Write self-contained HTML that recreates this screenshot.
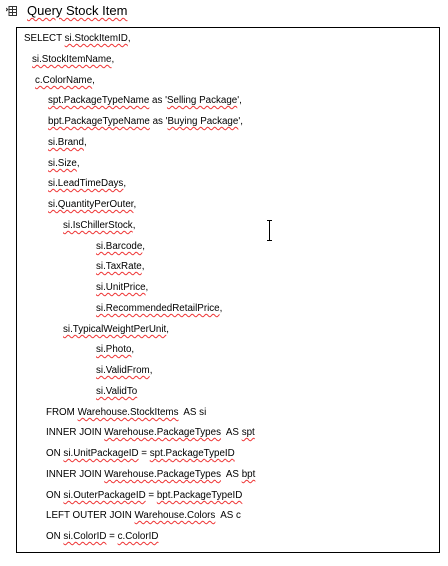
<!DOCTYPE html>
<html><head><meta charset="utf-8"><style>
body{margin:0;width:448px;height:564px;background:#fff;position:relative;overflow:hidden;font-family:"Liberation Sans",sans-serif;color:#000}
.t{position:absolute;left:27px;top:3px;font-size:13px;line-height:16px}
.box{position:absolute;left:16px;top:27px;width:422px;height:524px;border:1px solid #000}
.w{position:absolute;left:0;top:2px;width:448px;height:564px}
.l{position:absolute;font-size:9.8px;line-height:12px;white-space:pre}
u{text-decoration:underline wavy #e33;text-decoration-thickness:1px;text-underline-offset:2px}
.ic{position:absolute;left:6px;top:6px;width:11px;height:10px}
.cur{position:absolute;left:269px;top:220px;width:1px;height:21px;background:#000}
.cur:before,.cur:after{content:"";position:absolute;left:-2px;width:5px;height:1px;background:#000}
.cur:before{top:0}.cur:after{bottom:0}
</style></head><body>
<svg class="ic" viewBox="0 0 11 10"><rect x="3" y="0.5" width="7.5" height="9" fill="none" stroke="#333"/><line x1="3" y1="3.5" x2="10.5" y2="3.5" stroke="#333"/><line x1="3" y1="6.5" x2="10.5" y2="6.5" stroke="#333"/><line x1="6.5" y1="0.5" x2="6.5" y2="9.5" stroke="#333"/><path d="M0 2 L2 4 M0 5 L2 3" stroke="#333"/></svg>
<div class="t"><u>Query Stock Item</u></div>
<div class="box"></div>
<div class="cur"></div>
<div class="w">
<div class="l" style="left:24px;top:31px">SELECT <u>si.StockItemID</u>,</div>
<div class="l" style="left:32px;top:52px"><u>si.StockItemName</u>,</div>
<div class="l" style="left:35px;top:73px"><u>c.ColorName</u>,</div>
<div class="l" style="left:48px;top:93px"><u>spt.PackageTypeName</u> as '<u>Selling Package</u>',</div>
<div class="l" style="left:48px;top:114px"><u>bpt.PackageTypeName</u> as '<u>Buying Package</u>',</div>
<div class="l" style="left:48px;top:135px"><u>si.Brand</u>,</div>
<div class="l" style="left:48px;top:156px"><u>si.Size</u>,</div>
<div class="l" style="left:48px;top:176px"><u>si.LeadTimeDays</u>,</div>
<div class="l" style="left:48px;top:197px"><u>si.QuantityPerOuter</u>,</div>
<div class="l" style="left:63px;top:218px"><u>si.IsChillerStock</u>,</div>
<div class="l" style="left:96px;top:239px"><u>si.Barcode</u>,</div>
<div class="l" style="left:96px;top:259px"><u>si.TaxRate</u>,</div>
<div class="l" style="left:96px;top:280px"><u>si.UnitPrice</u>,</div>
<div class="l" style="left:96px;top:301px"><u>si.RecommendedRetailPrice</u>,</div>
<div class="l" style="left:63px;top:322px"><u>si.TypicalWeightPerUnit</u>,</div>
<div class="l" style="left:96px;top:342px"><u>si.Photo</u>,</div>
<div class="l" style="left:96px;top:363px"><u>si.ValidFrom</u>,</div>
<div class="l" style="left:96px;top:384px"><u>si.ValidTo</u></div>
<div class="l" style="left:46px;top:405px">FROM <u>Warehouse.StockItems</u>  AS si</div>
<div class="l" style="left:46px;top:425px">INNER JOIN <u>Warehouse.PackageTypes</u>  AS <u>spt</u></div>
<div class="l" style="left:46px;top:446px">ON <u>si.UnitPackageID</u> = <u>spt.PackageTypeID</u></div>
<div class="l" style="left:46px;top:467px">INNER JOIN <u>Warehouse.PackageTypes</u>  AS <u>bpt</u></div>
<div class="l" style="left:46px;top:488px">ON <u>si.OuterPackageID</u> = <u>bpt.PackageTypeID</u></div>
<div class="l" style="left:46px;top:508px">LEFT OUTER JOIN <u>Warehouse.Colors</u>  AS c</div>
<div class="l" style="left:46px;top:529px">ON <u>si.ColorID</u> = <u>c.ColorID</u></div>
</div>
</body></html>
